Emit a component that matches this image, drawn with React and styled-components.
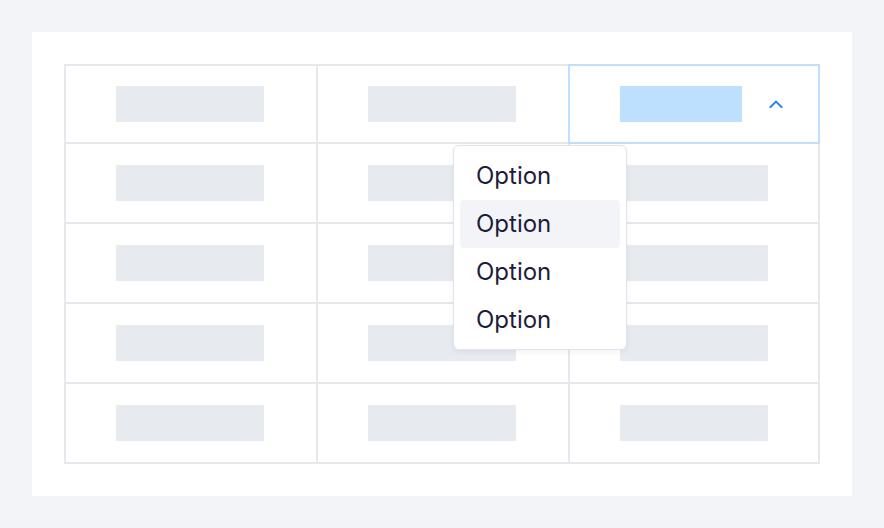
import React from "react";
import styled, { createGlobalStyle } from "styled-components";

const Global = createGlobalStyle`
  html, body { margin: 0; padding: 0; background: #f3f4f8; }
  body { font-family: Inter, "Noto Sans", sans-serif; }
  * { box-sizing: border-box; }
`;

const Page = styled.div`
  width: 884px;
  height: 528px;
  padding: 32px;
`;

const Card = styled.div`
  width: 820px;
  height: 464px;
  background: #ffffff;
  padding: 32px;
`;

const Table = styled.div`
  position: relative;
  width: 756px;
  height: 400px;
  border: 1px solid #e5e8ec;
  display: grid;
  grid-template-columns: 252px 252px 1fr;
  grid-template-rows: 78px repeat(4, 80px);
`;

const Cell = styled.div`
  position: relative;
  border: 1px solid ${(p) => (p.$active ? "#bfe0fd" : "#e5e8ec")};
  box-shadow: ${(p) => (p.$active ? "0 0 0 1px #bfe0fd" : "none")};
  z-index: ${(p) => (p.$active ? 1 : 0)};
  display: flex;
  align-items: center;
  justify-content: ${(p) => (p.$active ? "flex-start" : "center")};
  padding-left: ${(p) => (p.$active ? "50px" : "0")};
  padding-right: ${(p) => (p.$edge ? "0" : "2px")};
  background: #ffffff;
`;

const Bar = styled.div`
  width: ${(p) => p.$w || 148}px;
  height: 36px;
  background: ${(p) => (p.$active ? "#bde0fe" : "#e7eaef")};
`;

const Chevron = styled.svg`
  margin-left: 27px;
  width: 14px;
  height: 8px;
  display: block;
`;

const Menu = styled.div`
  position: absolute;
  left: 388px;
  top: 80px;
  width: 174px;
  height: 205px;
  background: #ffffff;
  border: 1px solid #e1e4ea;
  border-radius: 6px;
  box-shadow: 0 2px 6px rgba(20, 30, 60, 0.06);
  padding: 6px;
  z-index: 5;
  display: flex;
  flex-direction: column;
`;

const Item = styled.div`
  height: 48px;
  display: flex;
  align-items: center;
  padding-left: 16px;
  border-radius: 4px;
  font-size: 24px;
  color: #1b1d3a;
  background: ${(p) => (p.$hover ? "#f3f4f8" : "transparent")};
`;

export default function App() {
  const cells = [];
  for (let r = 0; r < 5; r++) {
    for (let c = 0; c < 3; c++) {
      const active = r === 0 && c === 2;
      cells.push(
        <Cell key={`${r}-${c}`} $active={active} $edge={c === 2}>
          {active ? (
            <>
              <Bar $active $w={122} />
              <Chevron viewBox="0 0 14 8" fill="none">
                <path
                  d="M1.5 7 L7 1.6 L12.5 7"
                  stroke="#2a7ff2"
                  strokeWidth="2"
                  strokeLinecap="square"
                />
              </Chevron>
            </>
          ) : (
            <Bar />
          )}
        </Cell>
      );
    }
  }
  return (
    <>
      <Global />
      <Page>
        <Card>
          <Table>
            {cells}
            <Menu>
              <Item>Option</Item>
              <Item $hover>Option</Item>
              <Item>Option</Item>
              <Item>Option</Item>
            </Menu>
          </Table>
        </Card>
      </Page>
    </>
  );
}
